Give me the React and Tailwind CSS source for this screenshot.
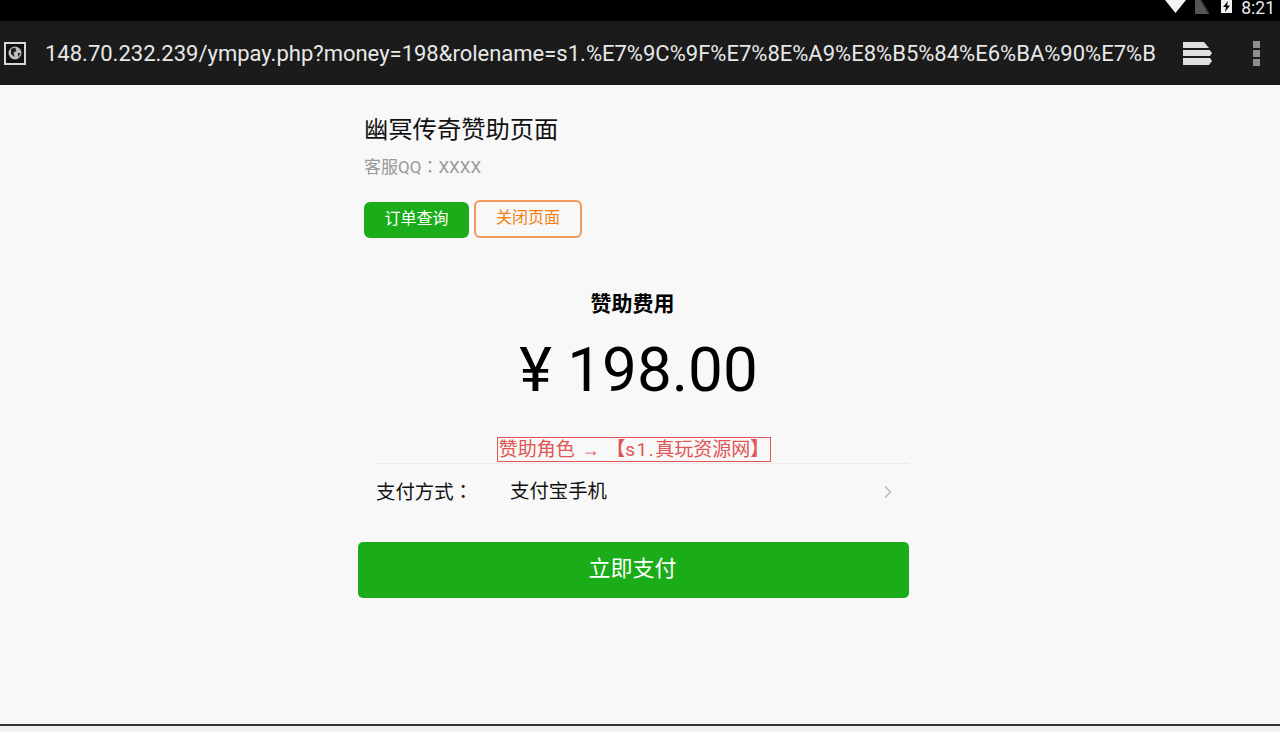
import { ChevronRight } from "lucide-react";

const cjk = "font-['Roboto','Noto_Sans_CJK_SC',sans-serif]";

function StatusBar() {
	return (
		<div className="h-[21px] bg-black flex items-start justify-end pr-[5px] text-white">
			<svg width="21" height="13" viewBox="0 0 21 13"><path d="M0 0H21L10.5 13Z" fill="#f4f4f4" /></svg>
			<svg className="ml-[9px]" width="14" height="14" viewBox="0 0 14 14">
				<path d="M0 0H6L14 13V14H0Z" fill="#555" />
				<path d="M6 0L14 13" stroke="#222" strokeWidth="1.5" />
			</svg>
			<svg className="ml-[12px]" width="11" height="13" viewBox="0 0 11 13">
				<rect width="11" height="13" fill="#f0f0f0" />
				<path d="M7 1L2 7H5L4 12L9 5.5H6Z" fill="#000" />
			</svg>
			<span className="ml-[9px] mt-[1px] text-[17.5px] leading-[14px] text-[#e8e8e8] font-['Roboto',sans-serif]">8:21</span>
		</div>
	);
}

function AddressBar() {
	return (
		<div className="h-[64px] bg-[#1b1b1b] flex items-center text-[#e8e8e8]">
			<div className="ml-[4px] w-[22px] h-[23px] border-2 border-[#d8d8d8] bg-[#111] flex items-center justify-center">
				<svg width="14" height="14" viewBox="0 0 14 14">
					<circle cx="7" cy="7" r="6.5" fill="#bdbdbd" />
					<path d="M3 3L7 1.5L8.5 5L5.5 6.5L6.5 11L3 8ZM10 7L12.5 7L10 11.5Z" fill="#1b1b1b" />
				</svg>
			</div>
			<p className="ml-[19px] w-[1121px] whitespace-nowrap overflow-hidden text-[22px] font-['Roboto',sans-serif]">
				148.70.232.239/ympay.php?money=198&amp;rolename=s1.%E7%9C%9F%E7%8E%A9%E8%B5%84%E6%BA%90%E7%B
			</p>
			<svg className="ml-[17px]" width="29" height="23" viewBox="0 0 29 23" fill="#e0e0e0">
				<path d="M0 0H21L26 6H0Z" />
				<path d="M0 8H26.5L29 11L27 14H0Z" />
				<path d="M0 16H27L29 19L26 23H0Z" />
			</svg>
			<div className="ml-[41px] flex flex-col gap-[2px]">
				<div className="w-[7px] h-[7px] bg-[#8f8f8f]" />
				<div className="w-[7px] h-[7px] bg-[#8f8f8f]" />
				<div className="w-[7px] h-[7px] bg-[#8f8f8f]" />
			</div>
		</div>
	);
}

export default function App() {
	return (
		<div className={"h-[732px] overflow-hidden bg-[#f8f8f8] flex flex-col " + cjk}>
			<StatusBar />
			<AddressBar />
			<div className="flex-1 flex justify-center pt-[28px]">
				<div className="w-[551px] ml-[-13px]">
					<h1 className="ml-[6px] text-[24.3px] leading-[34px] text-[#111]">幽冥传奇赞助页面</h1>
					<p className="ml-[6px] mt-[7px] text-[17px] leading-[24px] text-[#999]">
						客服QQ<span className="font-['Noto_Sans_CJK_TC',sans-serif]">：</span>XXXX
					</p>
					<div className="ml-[6px] mt-[21px] flex items-end gap-[5px]">
						<button className="w-[105px] h-[36px] pb-[2px] rounded-[6px] bg-[#1aad19] text-white text-[16px]">订单查询</button>
						<button className="w-[108px] h-[38px] pb-[2px] rounded-[6px] border-2 border-[#ee9a5c] text-[#f27e0f] text-[16px]">关闭页面</button>
					</div>
					<div className="mt-[52px] ml-[-2px] text-center text-[21px] leading-[28px] font-bold text-black">赞助费用</div>
					<div className="mt-[17px] ml-[10px] text-center text-[62px] leading-[70px] text-black">¥ 198.00</div>
					<div className="mt-[32px] flex justify-center">
						<span className="block h-[25px] border border-[#e05555] text-[#e05555] text-[19px] leading-[20px] px-[1px] ml-[1px] whitespace-nowrap">
							赞助角色 <span className="font-['Liberation_Sans',sans-serif] text-[18px] mx-[2px]">→</span> <span className="font-['Noto_Sans_CJK_TC',sans-serif] font-bold">【</span><span className="tracking-[1.5px]">s1.</span>真玩资源网<span className="font-['Noto_Sans_CJK_TC',sans-serif] font-bold">】</span>
						</span>
					</div>
					<div className="ml-[19px] mt-[1px] border-t border-[#ececec] h-[57px] flex items-center text-[19.4px] text-[#111]">
						<span className="w-[133px] ml-[-1px]">支付方式<span className="font-['Noto_Sans_CJK_TC',sans-serif]">：</span></span>
						<span className="flex-1 ml-[1px]">支付宝手机</span>
						<ChevronRight className="mr-[11px] text-[#bbb]" size={20} />
					</div>
					<button className="mt-[22px] w-full h-[56px] pb-[3px] pr-[2px] rounded-[5px] bg-[#1aad19] text-white text-[22px]">立即支付</button>
				</div>
			</div>
			<div className="h-[8px] border-t-2 border-[#333] bg-[#f1f1f1]" />
		</div>
	);
}
